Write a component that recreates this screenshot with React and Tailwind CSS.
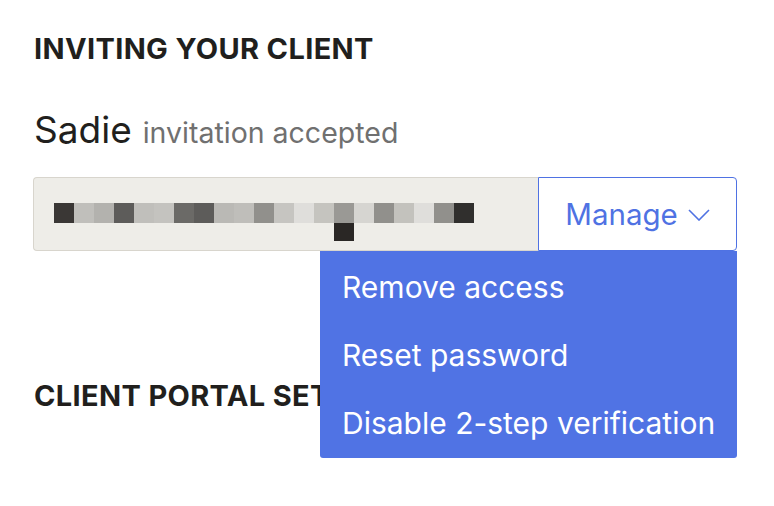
import React from "react";

const blocks = [
  "#3a3735", "#c0bfbb", "#b3b2ae", "#5d5c5a", "#c0bfbb", "#c4c3bf", "#6b6a67",
  "#5d5c5a", "#bab9b5", "#bfbeba", "#91908c", "#c6c5c1", "#dfdedb", "#c5c4bf",
  "#9a9995", "#d6d5d1", "#91908c", "#c3c2bd", "#dfdedb", "#91908c", "#302f2d",
];

function App() {
  return (
    <div
      className="min-h-[506px] w-[774px] bg-white pl-[33px] pt-[32px] text-[#211f1d]"
      style={{ fontFamily: "Inter, 'Liberation Sans', sans-serif" }}
    >
      <div className="w-[704px]">
        <h2 className="pl-[1px] text-[29px] font-bold leading-[34px] tracking-[0.35px]">
          INVITING YOUR CLIENT
        </h2>

        <div className="mt-[42px] flex h-[44px] items-baseline pl-[1px] leading-[44px]">
          <span className="text-[37px]">Sadie</span>
          <span className="ml-[11px] text-[28.5px] text-[#707070]">invitation accepted</span>
        </div>

        <div className="relative mt-[25px] flex h-[74px]">
          <div className="flex-1 rounded-l-[4px] border-[1.5px] border-r-0 border-[#d8d5cd] bg-[#eeede8] pl-[20px] pt-[24.5px]">
            <div className="flex">
              {blocks.map((c, i) => (
                <div key={i} className="h-[20px] w-[20px]" style={{ backgroundColor: c }} />
              ))}
            </div>
            <div className="ml-[280px] h-[18px] w-[20px] bg-[#2a2725]" />
          </div>
          <button className="flex w-[199px] items-center justify-center gap-[10px] rounded-r-[4px] border-[1.5px] border-[#4f72e3] bg-white text-[29.5px] leading-[35px] text-[#4f72e3]">
            <span>Manage</span>
            <svg width="22" height="12" viewBox="0 0 22 12" fill="none" className="mt-[2px]">
              <path d="M1 1l10 10L21 1" stroke="#4f72e3" strokeWidth="1.6" />
            </svg>
          </button>

          <div className="absolute right-0 top-[74px] z-10 w-[417px] rounded-b-[3px] bg-[#5073e4] pb-[1px] pl-[22px] pt-[2px] text-[30px] text-white">
            <div className="h-[68px] leading-[68px]">Remove access</div>
            <div className="h-[68px] leading-[68px]">Reset password</div>
            <div className="h-[68px] leading-[68px]">Disable 2-step verification</div>
          </div>
        </div>

        <h2 className="mt-[128px] pl-[1px] text-[29px] font-bold leading-[34px] tracking-[0.35px]">
          CLIENT PORTAL SETTINGS
        </h2>
      </div>
    </div>
  );
}

export default App;
